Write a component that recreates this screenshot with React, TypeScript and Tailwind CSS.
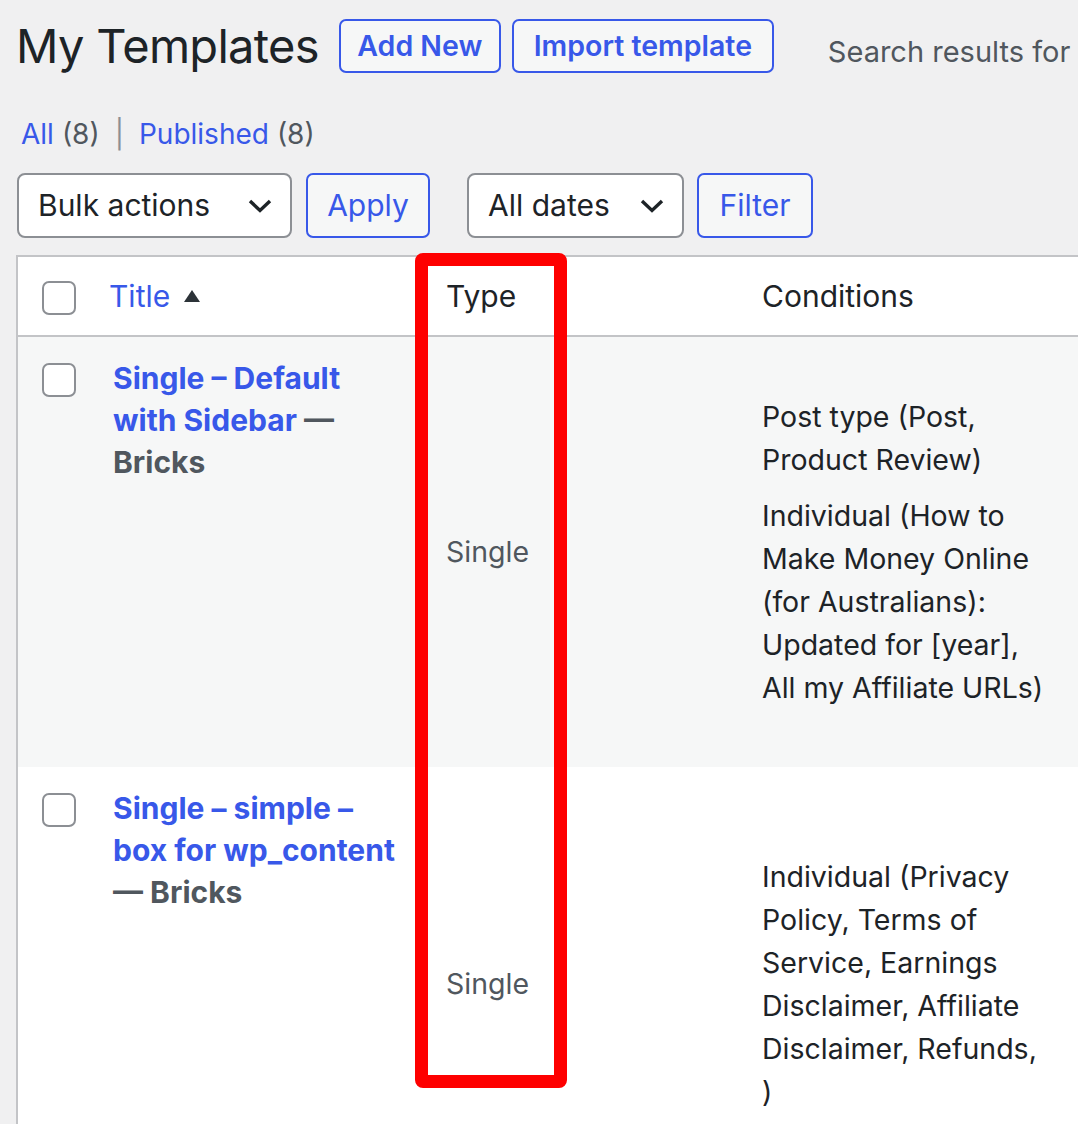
import type { ReactNode } from 'react'

// WordPress "My Templates" list, shown at ~2.2x zoom, with a red annotation box
// drawn round the Type column.

const BLUE = 'text-[#3858e9]'

const Checkbox = () => (
  <span className="block h-[34px] w-[34px] rounded-[7px] border-2 border-[#8c8f94] bg-white" />
)

const Chevron = () => (
  <svg width="24" height="14" viewBox="0 0 24 14" className="shrink-0">
    <polyline
      points="2,2 12,11.5 22,2"
      fill="none"
      stroke="#1d2327"
      strokeWidth="3.4"
      strokeLinejoin="miter"
    />
  </svg>
)

const OutlineButton = ({ children, className = '' }: { children: ReactNode; className?: string }) => (
  <button
    className={`flex items-center justify-center rounded-[7px] border-2 border-[#3858e9] bg-[#f6f7f7] ${BLUE} ${className}`}
  >
    {children}
  </button>
)

const Select = ({ label, className = '' }: { label: string; className?: string }) => (
  <div
    className={`flex h-[65px] items-center justify-between rounded-[8px] border-2 border-[#8c8f94] bg-white pl-[19px] pr-[18px] text-[30px] text-[#1d2327] ${className}`}
  >
    <span>{label}</span>
    <Chevron />
  </div>
)

interface Row {
  title: ReactNode
  conditions: string[]
  height: string
  bg: string
}

const ROWS: Row[] = [
  {
    title: (
      <>
        <span className={BLUE}>Single – Default with Sidebar</span>
        <span className="text-[#50575e]"> — Bricks</span>
      </>
    ),
    conditions: [
      'Post type (Post, Product Review)',
      'Individual (How to Make Money Online (for Australians): Updated for [year], All my Affiliate URLs)',
    ],
    height: 'h-[431px]',
    bg: 'bg-[#f6f7f7]',
  },
  {
    title: (
      <>
        <span className={BLUE}>Single – simple – box for wp_content</span>
        <span className="text-[#50575e]"> — Bricks</span>
      </>
    ),
    conditions: [
      'Individual (Privacy Policy, Terms of Service, Earnings Disclaimer, Affiliate Disclaimer, Refunds, )',
    ],
    height: 'h-[434px]',
    bg: 'bg-white',
  },
]

export default function App() {
  return (
    <div
      className="h-[1124px] w-[1078px] overflow-hidden bg-[#f0f0f1] text-[#1d2327]"
      style={{ fontFamily: 'Inter, "Noto Sans", sans-serif' }}
    >
      {/* heading line */}
      <div className="mt-[19px] flex h-[54px] items-center whitespace-nowrap pl-4">
        <h1 className="text-[47px] font-normal leading-[54px] tracking-[-0.7px]">My Templates</h1>
        <OutlineButton className="ml-[20px] h-[54px] w-[162px] text-[28.5px] font-semibold">Add New</OutlineButton>
        <OutlineButton className="ml-[11px] h-[54px] w-[262px] text-[28.5px] font-semibold">
          Import template
        </OutlineButton>
        <span className="ml-[54px] mt-[12px] text-[29px] text-[#50575e]">Search results for</span>
      </div>

      {/* status filters */}
      <div className="mt-[41px] flex h-[40px] items-center whitespace-nowrap pl-[21px] text-[28px] text-[#50575e]">
        <span className={BLUE}>All</span>
        <span className="ml-[8px]">(8)</span>
        <span className="mx-[15px] text-[#8c8f94]">|</span>
        <span className={BLUE}>Published</span>
        <span className="ml-[8px]">(8)</span>
      </div>

      {/* bulk actions / date filter */}
      <div className="mt-[19px] flex items-center pl-[17px]">
        <Select label="Bulk actions" className="w-[275px]" />
        <OutlineButton className="ml-[14px] h-[65px] w-[124px] text-[30px]">Apply</OutlineButton>
        <Select label="All dates" className="ml-[37px] w-[217px]" />
        <OutlineButton className="ml-[13px] h-[65px] w-[116px] text-[30px]">Filter</OutlineButton>
      </div>

      {/* list table */}
      <div className="relative mt-[17px] ml-4">
        <table className="w-[1070px] table-fixed border-collapse border-l-2 border-t-2 border-[#c3c4c7] bg-white text-[30px]">
          <colgroup>
            <col className="w-[82px]" />
            <col className="w-[333px]" />
            <col className="w-[316px]" />
            <col />
          </colgroup>
          <thead>
            <tr className="h-[80px] border-b-2 border-[#c3c4c7]">
              <th className="p-0 align-middle">
                <div className="flex justify-center pt-[3px]">
                  <Checkbox />
                </div>
              </th>
              <th className="pl-[10px] text-left font-normal">
                <span className={`inline-flex items-center gap-[14px] ${BLUE}`}>
                  Title
                  <svg width="16" height="12" viewBox="0 0 16 12">
                    <polygon points="8,0 16,12 0,12" fill="#2c3338" />
                  </svg>
                </span>
              </th>
              <th className="pl-[14px] text-left font-normal">Type</th>
              <th className="pl-[14px] text-left font-normal">Conditions</th>
            </tr>
          </thead>
          <tbody>
            {ROWS.map((row, i) => (
              <tr key={i} className={`${row.height} ${row.bg}`}>
                <td className="p-0 align-top">
                  <div className="flex justify-center pt-[26px]">
                    <Checkbox />
                  </div>
                </td>
                <td className="pl-[14px] pr-[26px] pt-[20px] align-top text-[30px] font-bold leading-[42px]">
                  {row.title}
                </td>
                <td className="pl-[14px] align-middle text-[28.5px] text-[#50575e]">Single</td>
                <td className="pl-[14px] pr-[40px] align-middle text-[28.5px] leading-[43px] text-[#1d2327]">
                  <div className="flex flex-col gap-[13px]">
                    {row.conditions.map((c) => (
                      <p key={c}>{c}</p>
                    ))}
                  </div>
                </td>
              </tr>
            ))}
          </tbody>
        </table>

        {/* red annotation box round the Type column */}
        <div className="pointer-events-none absolute left-[399px] top-[-2px] h-[835px] w-[152px] rounded-[8px] border-[13px] border-[#fe0000]" />
      </div>
    </div>
  )
}
